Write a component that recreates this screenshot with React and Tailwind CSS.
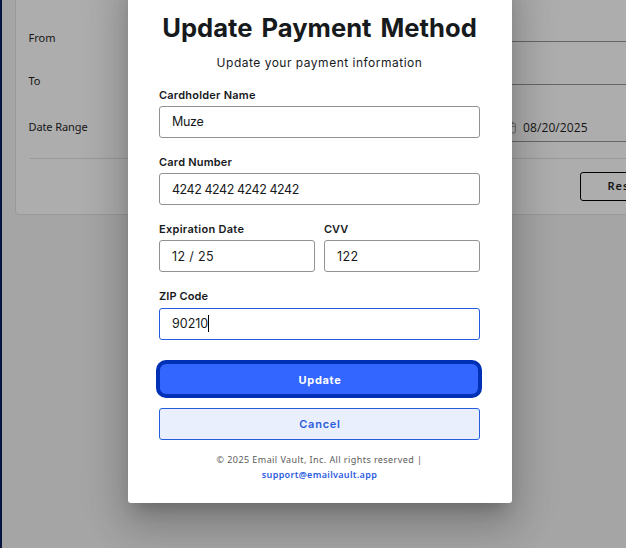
import { Calendar } from "lucide-react";

function Field({ label, value, focused = false, labelClass = "", valueClass = "" }) {
  return (
    <div className="flex h-[67.2px] min-w-0 flex-1 flex-col">
      <div className={`flex h-[17px] items-center pb-[2px] text-[11px] font-semibold leading-[14px] ${labelClass}`}>
        <span className="whitespace-nowrap">{label}</span>
      </div>
      <div
        className={`mt-[2px] flex h-[32px] items-center rounded-[3px] border bg-white px-[12px] text-[12.5px] ${
          focused ? "border-[#245ce0]" : "border-[#929292]"
        }`}
      >
        <span className={`whitespace-nowrap leading-4 ${valueClass}`}>{value}</span>
        {focused && <span className="h-[17px] w-px bg-black" />}
      </div>
    </div>
  );
}

function FilterPage() {
  return (
    <div className="flex h-full w-full bg-[#a5a5a5]">
      <div className="w-[2px] shrink-0 bg-[#07143f]" />
      <div className="min-w-0 flex-1 pl-[13px]">
        <div className="-mt-2 h-[223px] w-[640px] rounded-[4px] border border-[#999999] bg-[#adadad] pl-[12.5px] pt-[7px] font-['Noto_Sans',sans-serif] text-[11px] text-[#151515]">
          <div className="flex h-[42px]">
            <div className="w-[470px] pt-[30px] leading-4">From</div>
            <div className="flex-1 border-b border-[#666666]" />
          </div>
          <div className="flex h-[43px]">
            <div className="w-[470px] pt-[31px] leading-4">To</div>
            <div className="flex-1 border-b border-[#666666]" />
          </div>
          <div className="flex h-[57px]">
            <div className="w-[475.5px] pt-[34px] leading-4 tracking-[-0.1px]">Date Range</div>
            <div className="flex flex-1 items-center gap-[6px] border-b border-[#666666] pt-[29px] font-['Open_Sans',sans-serif] text-[12px] tracking-[0.1px]">
              <Calendar size={13} strokeWidth={1.8} className="text-[#666666]" />
              <span>08/20/2025</span>
            </div>
          </div>
          <div className="ml-px mt-[16px] border-t border-[#999999]" />
          <div className="flex pl-[551.5px] pt-[13px]">
            <div className="flex h-[29px] w-[96px] shrink-0 items-center rounded-[3px] border border-black pl-[26.5px] text-[11px] font-semibold tracking-[1px]">
              Reset
            </div>
          </div>
        </div>
      </div>
    </div>
  );
}

export default function App() {
  return (
    <div className="relative h-[548px] w-[626px] overflow-hidden font-['Inter',sans-serif] text-[#171a1c]">
      <FilterPage />
      <div className="absolute -top-8 left-[128px] flex h-[535px] w-[384px] flex-col rounded-[3px] bg-white pl-[31px] pr-[32px] pt-[42px] shadow-[0_11px_15px_-7px_rgba(0,0,0,0.2),0_24px_38px_3px_rgba(0,0,0,0.14),0_9px_46px_8px_rgba(0,0,0,0.12)]">
        <h1 className="flex h-[36px] items-center justify-center whitespace-nowrap pt-px text-[25.6px] font-bold [word-spacing:3px]">
          Update Payment Method
        </h1>
        <p className="mt-[8px] flex h-[17px] items-center justify-center whitespace-nowrap text-[12px] tracking-[0.5px]">
          Update your payment information
        </p>
        <div className="mt-[16px]">
          <Field label="Cardholder Name" value="Muze" labelClass="tracking-[0.22px]" valueClass="tracking-[-0.3px]" />
          <Field
            label="Card Number"
            value="4242 4242 4242 4242"
            labelClass="tracking-[0.2px]"
            valueClass="pt-[2px] tracking-[-0.45px]"
          />
          <div className="flex gap-[9px]">
            <Field label="Expiration Date" value="12 / 25" labelClass="tracking-[0.3px]" valueClass="pt-[2px] tracking-[0.35px]" />
            <Field label="CVV" value="122" valueClass="pt-[2px] tracking-[0.4px]" />
          </div>
          <Field label="ZIP Code" value="90210" labelClass="tracking-[0.1px]" focused />
        </div>
        <button className="-ml-[3px] -mr-[2px] mt-[4px] flex h-[38px] shrink-0 items-center justify-center rounded-[10px] border-4 border-[#0030b5] bg-[#3366ff] pl-[2px] pt-[2px] text-[11px] font-bold tracking-[0.7px] text-white">
          Update
        </button>
        <button className="mt-[10px] flex h-[32px] shrink-0 items-center justify-center rounded-[3px] border border-[#245ce0] bg-[#e9effd] pl-px text-[11px] font-semibold tracking-[0.75px] text-[#2b5ce0]">
          Cancel
        </button>
        <div className="mt-[12px] flex flex-col items-center whitespace-nowrap font-['Noto_Sans',sans-serif] text-[9px] leading-[15px] text-[#5a5a5a]">
          <span className="tracking-[0.43px]">© 2025 Email Vault, Inc. All rights reserved |</span>
          <span className="font-semibold tracking-[0.33px] text-[#2b5ce0]">support@emailvault.app</span>
        </div>
      </div>
    </div>
  );
}
